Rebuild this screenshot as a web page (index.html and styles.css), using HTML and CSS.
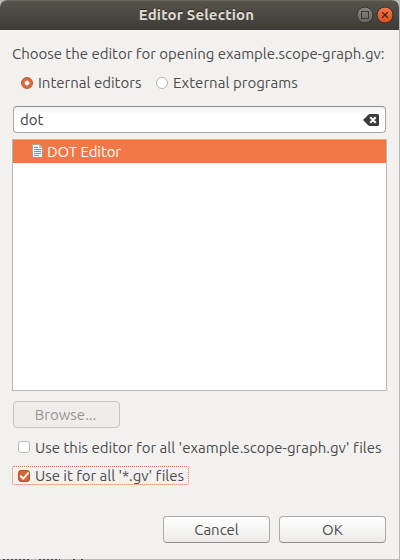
FILE: index.html
```html
<!DOCTYPE html>
<html lang="en">
<head>
<meta charset="utf-8">
<title>Editor Selection</title>
<link rel="stylesheet" href="styles.css">
</head>
<body>
<div class="desktop">
  <main class="dialog">
    <header class="titlebar">
      <h1 class="title"><span class="t-title">Editor Selection</span></h1>
      <div class="controls">
        <svg width="18" height="18" viewBox="0 0 18 18">
          <defs><linearGradient id="gr" x2="0" y2="1"><stop offset="0" stop-color="#88867e"/><stop offset="1" stop-color="#66645d"/></linearGradient></defs>
          <circle cx="9" cy="9" r="8" fill="url(#gr)" stroke="#33322e"/>
          <rect x="5.5" y="5.5" width="7" height="7" fill="none" stroke="#3c3b37"/>
        </svg>
        <svg width="18" height="18" viewBox="0 0 18 18">
          <defs><linearGradient id="or" x2="0" y2="1"><stop offset="0" stop-color="#f4784f"/><stop offset="1" stop-color="#df4c1c"/></linearGradient></defs>
          <circle cx="9" cy="9" r="8" fill="url(#or)" stroke="#33322e"/>
          <path d="M6.2 6.2l5.6 5.6M11.8 6.2l-5.6 5.6" stroke="#46291d" stroke-width="1.3"/>
        </svg>
      </div>
    </header>
    <section class="content">
      <p class="prompt"><span class="t-prompt">Choose the editor for opening example.scope-graph.gv:</span></p>
      <div class="radios">
        <label class="radio internal"><i class="dot on"></i><span>Internal editors</span></label>
        <label class="radio"><i class="dot"></i><span class="t-external">External programs</span></label>
      </div>
      <div class="search">
        <span>dot</span>
        <svg width="16" height="12" viewBox="0 0 16 12"><path d="M0 6L5.2.7Q5.8 0 6.8 0H14.5Q16 0 16 1.5v9Q16 12 14.5 12H6.8Q5.8 12 5.2 11.3z" fill="#3c3c3c"/><path d="M7.3 3.3l5.4 5.4M12.7 3.3L7.3 8.7" stroke="#fff" stroke-width="2"/></svg>
      </div>
      <div class="list">
        <div class="row">
          <svg class="file" width="11" height="14" viewBox="0 0 11 14"><path d="M.5.5H7L10.500 4V13.500H.5z" fill="#eef4fb" stroke="#8198ad"/><path d="M.5 9V.5H7L10.500 4V8" fill="none" stroke="#b5a987"/><path d="M7 .5V4h3.500z" fill="#d9c68c"/><path d="M2 3.500h4M2 5.500h7M2 7.500h7M2 9.500h7M2 11.500h5" stroke="#7b90c0"/></svg>
          <span class="t-editor">DOT Editor</span>
        </div>
      </div>
      <div class="button disabled"><span>Browse...</span></div>
      <label class="check"><i class="box"></i><span class="t-all">Use this editor for all 'example.scope-graph.gv' files</span></label>
      <label class="check focused"><i class="box on"><svg width="11" height="10" viewBox="0 0 11 10"><path d="M1.300 4.800L4.200 7.600 9.700 1.600" fill="none" stroke="#fff" stroke-width="2"/></svg></i><span class="t-gv">Use it for all '*.gv' files</span></label>
      <footer class="actions">
        <div class="button"><span>Cancel</span></div>
        <div class="button"><span>OK</span></div>
      </footer>
    </section>
  </main>
  <svg class="behind" width="100" height="1" viewBox="0 0 100 1"><path d="M3 .5H30M39 .5H60M73 .5H75M81 .5H83" stroke="#45404c" stroke-dasharray="2 2"/></svg>
</div>
</body>
</html>
```
FILE: styles.css
```css
* { box-sizing: border-box; }
body { margin: 0; overflow: hidden; font: 15px/20px Ubuntu, "Noto Sans", sans-serif; font-variant-ligatures: none; color: #4c4c4c; }
.desktop { width: 400px; height: 560px; background: #b9b9b9; padding-right: 1px; }
.dialog { height: 559px; background: #f2f1f0; border-radius: 7px 7px 0 0; overflow: hidden; }
.titlebar { height: 30px; position: relative; display: flex; justify-content: center; align-items: center; padding-right: 6px; background: linear-gradient(#56544a, #3c3b37); border-top: 1px solid #69675c; }
.title { margin: -2px 0 0; font-size: 15px; line-height: 20px; color: #dfdbd2; text-shadow: 0 -1px #2c2b27; }
.t-title { letter-spacing: .15px; }
.controls { position: absolute; right: 5px; top: 5px; display: flex; gap: 2px; }
.content { padding: 14px 12px 0; }
span { white-space: nowrap; }
svg { display: block; flex: none; }
.prompt { margin: 0; height: 20px; }
.t-prompt { letter-spacing: -.025px; }
.t-external { letter-spacing: .03px; }
.t-editor { letter-spacing: -.08px; }
.t-gv { letter-spacing: -.04px; }
.radios { display: flex; padding-left: 9px; margin-top: 9px; height: 20px; }
.radio { display: flex; align-items: center; gap: 5px; }
.internal { width: 135px; }
.dot { width: 12px; height: 12px; border: 1px solid #b5b3b1; border-radius: 50%; background: #fff; flex: none; }
.dot.on { border: 1px solid #b9532c; background: radial-gradient(circle, #fff 1.8px, #dc6b40 2.8px); }
.search { display: flex; align-items: center; justify-content: space-between; width: 373px; height: 27px; margin: 13px 0 0 1px; padding: 0 6px; border: 1px solid #aaa8a6; border-top-color: #8f8d8b; border-radius: 4px; background: linear-gradient(#f3f3f3, #fff 8px); color: #3c3c3c; }
.list { width: 375px; height: 252px; margin-top: 6px; border: 1px solid #b8b6b4; background: #fff; }
.row { height: 23px; padding-left: 19px; display: flex; align-items: center; gap: 4px; background: #f07746; color: #fff; }
.file { margin-top: -2px; }
.button { width: 107px; height: 27px; display: flex; align-items: center; justify-content: center; border: 1px solid #acaaa8; border-bottom-color: #92908e; border-radius: 4px; background: linear-gradient(#fff, #ebeae8); }
.disabled { margin: 10px 0 0 1px; border-color: #c8c6c4; background: #eeedec; color: #979593; }
.disabled span { margin-right: 2px; }
.check { display: flex; align-items: center; gap: 5px; height: 20px; margin-top: 9px; padding-left: 6px; }
.t-all { margin-top: 1px; }
.box { width: 12px; height: 12px; flex: none; border: 1px solid #b9b7b5; border-radius: 3px; background: #fff; }
.box.on { border-color: #bd4f26; background: #d9623a; }
.focused { width: 177px; height: 19px; margin-top: 9px; padding-left: 5px; border: 1px dotted #ed6b38; border-radius: 2px; }
.actions { display: flex; gap: 9px; margin: 31px 0 0 151px; }
```
